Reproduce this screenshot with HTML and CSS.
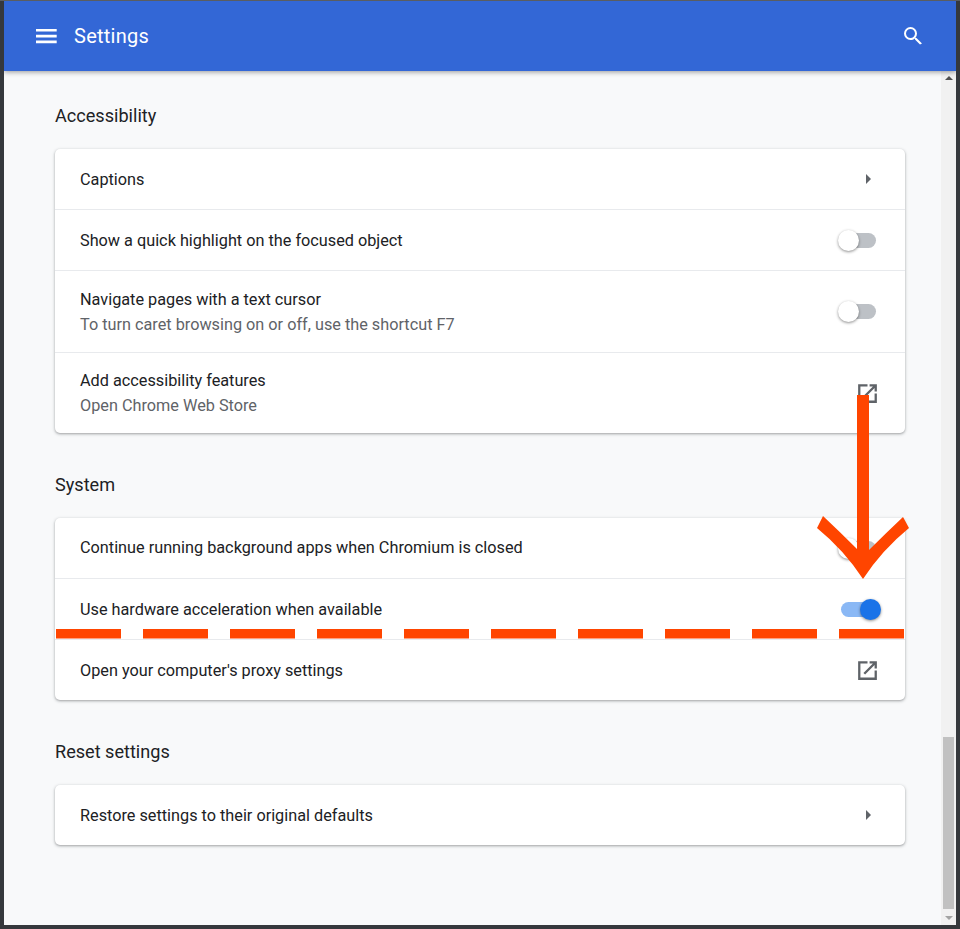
FILE: index.html
```html
<!DOCTYPE html>
<html lang="en">
<head>
<meta charset="utf-8">
<title>Settings</title>
<link rel="stylesheet" href="styles.css">
</head>
<body>
<div class="window">
  <header class="topbar">
    <svg class="menu-icon" width="24" height="24" viewBox="0 0 24 24"><path d="M2 5h20.700v2.600H2zM2 10.800h20.700v2.600H2zM2 16.600h20.700v2.600H2z" fill="#fff"/></svg>
    <h1 class="title">Settings</h1>
    <svg class="search-icon" width="24" height="24" viewBox="0 0 24 24"><path d="M15.500 14h-.79l-.28-.27A6.470 6.470 0 0 0 16 9.500 6.500 6.500 0 1 0 9.500 16c1.610 0 3.090-.59 4.230-1.570l.27.28v.79l5 4.990L20.990 19.500l-5.490-5.500zm-6 0C7.010 14 5 11.990 5 9.500S7.010 5 9.500 5 14 7.010 14 9.500 11.990 14 9.500 14z" fill="#fff"/></svg>
  </header>
  <div class="body">
    <main class="content">
      <h2 class="section-title first">Accessibility</h2>
      <section class="card">
        <div class="row h60"><span class="label low">Captions</span><span class="arrow-right"></span></div>
        <div class="row h61"><span class="label low">Show a quick highlight on the focused object</span><span class="toggle"><span class="track"></span><span class="knob"></span></span></div>
        <div class="row h82"><div class="two low"><span class="label">Navigate pages with a text cursor</span><span class="sub">To turn caret browsing on or off, use the shortcut F7</span></div><span class="toggle"><span class="track"></span><span class="knob"></span></span></div>
        <div class="row h81"><div class="two"><span class="label">Add accessibility features</span><span class="sub">Open Chrome Web Store</span></div><svg class="ext" width="25" height="25" viewBox="0 0 24 24"><path d="M3 3h9v2.200H5.200v13.600h13.600V12H21v9H3zM14 3h7v7h-2.200V6.800l-9.100 9.100-1.600-1.600 9.100-9.100H14z" fill="#5f6368"/></svg></div>
      </section>
      <h2 class="section-title">System</h2>
      <section class="card">
        <div class="row h60"><span class="label">Continue running background apps when Chromium is closed</span><span class="toggle"><span class="track"></span><span class="knob"></span></span></div>
        <div class="row h61"><span class="label low">Use hardware acceleration when available</span><span class="toggle on"><span class="track"></span><span class="knob"></span></span></div>
        <div class="row h61"><span class="label low">Open your computer's proxy settings</span><svg class="ext" width="25" height="25" viewBox="0 0 24 24"><path d="M3 3h9v2.200H5.200v13.600h13.600V12H21v9H3zM14 3h7v7h-2.200V6.800l-9.100 9.100-1.600-1.600 9.100-9.100H14z" fill="#5f6368"/></svg></div>
      </section>
      <h2 class="section-title">Reset settings</h2>
      <section class="card">
        <div class="row h60"><span class="label low">Restore settings to their original defaults</span><span class="arrow-right"></span></div>
      </section>
    </main>
    <div class="scrollbar">
      <span class="sb-up"></span>
      <div class="sb-track"><div class="sb-thumb"></div></div>
      <span class="sb-down"></span>
    </div>
  </div>
</div>
<svg class="annotation" width="960" height="929" viewBox="0 0 960 929">
  <path d="M56 629h65v9.600H56zM143 629h65v9.600h-65zM230 629h65v9.600h-65zM317 629h65v9.600h-65zM404 629h65v9.600h-65zM491 629h65v9.600h-65zM578 629h65v9.600h-65zM665 629h65v9.600h-65zM752 629h65v9.600h-65zM839 629h65v9.600h-65z" fill="#ff4500"/>
  <path d="M857 395h12v155q17-17 34-33l6 11q-27 22-46 51q-19-29-46-51l6-12q17 16 34 33z" fill="#ff4500"/>
</svg>
</body>
</html>
```
FILE: styles.css
```css
* { box-sizing: border-box; }
html, body { margin: 0; padding: 0; height: 929px; overflow: hidden; }
body { background: #35383c; font-family: Roboto, sans-serif; position: relative; border-top: 1px solid #5a5d61; }
.window {
  margin: 0 4px;
  height: 924px;
  display: flex;
  flex-direction: column;
  background: #f8f9fa;
  overflow: hidden;
}
.topbar {
  flex: 0 0 70px;
  background: #3367d6;
  display: flex;
  align-items: center;
  padding: 0 31px 0 30px;
  color: #fff;
  position: relative;
  z-index: 2;
  box-shadow: 0 1px 5px rgba(0,0,0,.4);
}
.menu-icon { flex: none; }
.title { margin: 0 0 0 16px; font-size: 20px; font-weight: 400; letter-spacing: .25px; flex: 1; }
.search-icon { flex: none; }
.body { flex: 1; display: flex; min-height: 0; }
.content { flex: 1; padding: 0 36px 0 51px; }
.section-title {
  margin: 40px 0 21px;
  font-size: 18.100px;
  font-weight: 400;
  line-height: 24px;
  color: #202124;
  height: 24px;
}
.section-title.first { margin-top: 33px; }
.card {
  background: #fff;
  border-radius: 5px;
  box-shadow: 0 1px 2px rgba(60,64,67,.3), 0 1px 3px 1px rgba(60,64,67,.15);
}
.row {
  display: flex;
  align-items: center;
  justify-content: space-between;
  padding: 0 27px 0 25px;
  border-top: 1px solid #e8eaed;
}
.row:first-child { border-top: 0; }
.h60 { height: 60px; }
.h61 { height: 61px; }
.h81 { height: 81px; }
.h82 { height: 82px; }
.label { font-size: 16.250px; color: #202124; line-height: 20px; }
.low { padding-top: 2px; }
.two { display: flex; flex-direction: column; gap: 5px; }
.sub { font-size: 16.250px; color: #5f6368; line-height: 20px; }
.arrow-right {
  width: 0; height: 0;
  border-left: 5px solid #5f6368;
  border-top: 5px solid transparent;
  border-bottom: 5px solid transparent;
  margin-right: 7px;
}
.ext { flex: none; margin-right: -2px; }
.toggle { position: relative; display: block; width: 38px; height: 21px; flex: none; margin-right: 2px; }
.track {
  position: absolute; left: 4px; right: 0; top: 3px; height: 15px;
  border-radius: 8px; background: #bdc1c6;
}
.knob {
  position: absolute; left: 0; top: 0; width: 21px; height: 21px;
  border-radius: 50%; background: #fff;
  box-shadow: 0 1px 3px rgba(0,0,0,.45);
}
.toggle.on { left: 5px; }
.toggle.on .track { background: #8ab8f5; left: -2px; right: 4px; }
.toggle.on .knob { left: 17px; background: #1a73e8; }
.scrollbar {
  flex: 0 0 15px;
  background: #f1f1f1;
  display: flex;
  flex-direction: column;
  align-items: center;
  position: relative;
  z-index: 1;
}
.sb-up {
  margin-top: 5px;
  width: 0; height: 0;
  border-left: 4px solid transparent; border-right: 4px solid transparent;
  border-bottom: 4px solid #505050;
}
.sb-track { flex: 1; width: 11px; display: flex; flex-direction: column; justify-content: flex-end; padding-bottom: 7px; }
.sb-thumb { height: 172px; background: #c1c1c1; }
.sb-down {
  margin-bottom: 5px;
  width: 0; height: 0;
  border-left: 4px solid transparent; border-right: 4px solid transparent;
  border-top: 4px solid #a3a3a3;
}
.annotation { position: absolute; left: 0; top: -1px; z-index: 5; pointer-events: none; }
```
